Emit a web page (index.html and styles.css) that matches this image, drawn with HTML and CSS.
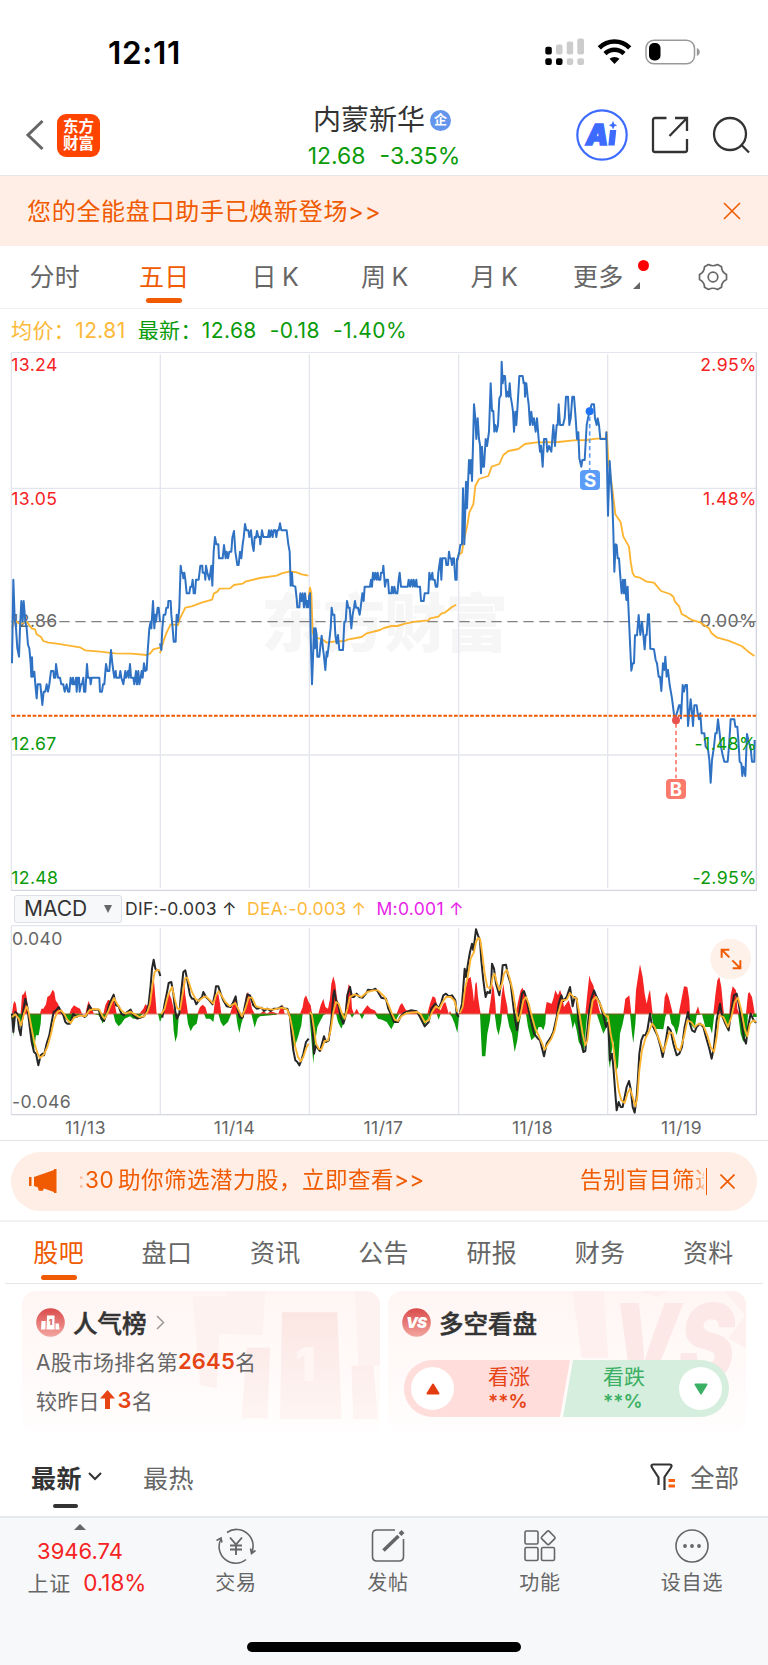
FILE: index.html
```html
<!DOCTYPE html>
<html lang="zh-CN">
<head>
    <meta charset="UTF-8">
    <meta name="viewport" content="width=device-width, initial-scale=1.0">
    <title>内蒙新华 12.68</title>
    <link rel="stylesheet" href="styles.css">
</head>
<body>
    <div class="status">
        <span class="time">12:11</span>
        <svg class="status-icons" width="158" height="30" viewBox="0 0 158 30">
            <g fill="#ccc">
                <rect x="11" y="6.500" width="6.500" height="10" rx="2"/>
                <rect x="21.700" y="3.500" width="6.500" height="13" rx="2"/>
                <rect x="32.300" y="0.500" width="6.700" height="16" rx="2"/>
                <rect x="21.700" y="20.300" width="6.500" height="6.700" rx="2"/>
                <rect x="32.300" y="20.300" width="6.700" height="6.700" rx="2"/>
            </g>
            <rect x="0.300" y="8.800" width="6.500" height="7.700" rx="2"/>
            <rect x="0.300" y="20.300" width="6.500" height="6.700" rx="2"/>
            <rect x="11" y="20.300" width="6.500" height="6.700" rx="2"/>
            <g fill="none" stroke="#000" stroke-width="4.500">
                <path d="M54.300 9.800a21.500 21.500 0 0 1 30.400 0"/>
                <path d="M60 15.700a13.500 13.500 0 0 1 19 0"/>
            </g>
            <path d="M64.500 20.800a7.500 7.500 0 0 1 10 0L69.500 26z"/>
            <rect x="101" y="2.200" width="48.500" height="23.600" rx="8" fill="none" stroke="#999" stroke-width="1.500"/>
            <rect x="104" y="5" width="11.500" height="17.500" rx="5"/>
            <path d="M151.800 10v8c4-1.500 4-6.500 0-8z" fill="#999"/>
        </svg>
    </div>

    <header class="header">
        <div class="header-left">
            <svg width="20" height="32" viewBox="0 0 20 32"><path d="M17.500 2L3 16l14.500 14" fill="none" stroke="#666" stroke-width="3"/></svg>
            <span class="logo">东方<br>财富</span>
        </div>
        <div class="header-title">
            <h1>内蒙新华<span class="badge">企</span></h1>
            <p class="down"><span>12.68</span><span>-3.35%</span></p>
        </div>
        <div class="header-right">
            <svg width="52" height="52" viewBox="0 0 52 52">
                <circle cx="26" cy="26" r="24.700" fill="none" stroke="#3d6bff" stroke-width="2.200"/>
                <text class="ai" x="10" y="36">A</text>
                <path d="M34 21h6.300l-1.600 15.500h-6.400z" fill="#3d6bff"/>
                <path d="M37 12l1.300 2.900 2.900 1.300-2.900 1.300L37 20.400l-1.300-2.900-2.900-1.300 2.900-1.300z" fill="#3d6bff"/>
            </svg>
            <svg width="38" height="38" viewBox="0 0 38 38" fill="none" stroke="#333" stroke-width="2.300">
                <path d="M15.500 2H4a2 2 0 0 0-2 2v30a2 2 0 0 0 2 2h30a2 2 0 0 0 2-2V23M24 2h12v13M36 2L18.500 20"/>
            </svg>
            <svg width="38" height="38" viewBox="0 0 38 38" fill="none" stroke="#333" stroke-width="2.300">
                <circle cx="18" cy="18" r="16"/>
                <path d="M29 28.500l8 8"/>
            </svg>
        </div>
    </header>

    <div class="banner">
        <span>您的全能盘口助手已焕新登场&gt;&gt;</span>
        <svg width="18" height="18" viewBox="0 0 18 18"><path d="M1 1l16 16M17 1L1 17" stroke="#f05a00" stroke-width="1.600"/></svg>
    </div>

    <nav class="periods">
        <a>分时</a>
        <a class="active">五日</a>
        <a class="k">日 K</a>
        <a class="k">周 K</a>
        <a class="k">月 K</a>
        <a class="more">更多<i class="dot"></i><i class="corner"></i></a>
        <a class="setting">
            <svg width="30" height="28" viewBox="0 0 30 28" fill="none" stroke="#666" stroke-width="1.700">
                <path d="M10.500 1.500Q15 4 19.500 1.500L23.500 3.800Q23.500 9 28.500 11.500V16.500Q23.500 19 23.500 24.200L19.500 26.500Q15 24 10.500 26.500L6.500 24.200Q6.500 19 1.500 16.500V11.500Q6.500 9 6.500 3.800Z" stroke-linejoin="round"/>
                <circle cx="15" cy="14" r="4.800"/>
            </svg>
        </a>
    </nav>

    <div class="quote">
        <span class="avg">均价：12.81</span>
        <span class="down"><b>最新：12.68</b><b>-0.18</b><b>-1.40%</b></span>
    </div>

    <!-- 分时图, 3 units = 1px -->
    <svg class="chart" width="768" height="540" viewBox="0 21 2304 1620">
        <text class="watermark" x="784" y="904" textLength="740">东方财富</text>
        <g class="grid">
            <path d="M34 22H2270M34 430H2270M34 1230H2270"/>
            <path d="M34 22V1636M481 28V1630M928 28V1630M1376 28V1630M1823 28V1630"/>
            <path class="edge" d="M34 1636H2269V22"/>
        </g>
        <g class="axis">
            <text class="up" x="34" y="77">13.24</text>
            <text class="up" x="34" y="479">13.05</text>
            <text x="34" y="847">12.86</text>
            <text class="down" x="34" y="1215">12.67</text>
            <text class="down" x="34" y="1617">12.48</text>
            <g text-anchor="end">
                <text class="up" x="2270" y="77">2.95%</text>
                <text class="up" x="2270" y="479">1.48%</text>
                <text x="2270" y="847">0.00%</text>
            </g>
        </g>
        <path d="M34 830H2268" stroke="#808080" stroke-width="4" stroke-dasharray="31 17"/>
        <g class="avg-line">
            <polyline points="36,850 42,825 60,837 80,830 95,850 105,853 110,868 123,876 130,888 145,893 170,896 240,907 255,916 300,920 345,925 395,926 440,930 450,926 460,913 480,908"/>
            <polyline points="480,925 490,890 500,862 512,838 534,840 540,820 546,808 556,788 575,784 605,773 636,764 642,745 652,740 658,731 690,730 702,720 728,716 736,710 780,699 830,692 845,685 870,679 890,682 905,688 925,692"/>
            <polyline transform="translate(900)" points="26,755 30,728 34,745 38,860 42,875 70,885 80,893 100,890 134,888 142,884 185,876 200,865 240,855 252,849 275,843 292,843 315,836 345,830 385,826 390,820 415,815 424,806 436,802 455,787 468,779"/>
            <polyline transform="translate(1320)" points="52,648 56,630 66,622 70,595 82,540 88,502 100,478 106,423 117,402 145,393 155,365 178,357 190,330 205,318 235,312 255,297 290,292 355,291 400,286 440,285 470,281 500,280"/>
            <polyline transform="translate(1320)" points="500,260 505,345 512,395 518,440 526,508 542,532 550,575 567,605 572,650 578,685 585,695 600,698 620,710 642,713 663,738 690,747 700,755 705,770 718,785 725,807 740,815 755,825 780,832 807,850 815,865 830,877 865,887 905,903 925,920 943,933"/>
        </g>
        <g class="price-line">
            <polyline points="36,955 40,704 44,820 48,850 52,910 57,935 60,850 64,768 68,830 71,768 76,830 80,850 84,900 88,910 92,955 94,995 96,937 98,995 103,980 106,1018 110,1060 113,1018 121,1018 127,1080 131,1040 136,1040 140,1018 144,1040 148,1018 153,978 160,978 162,998 166,998 168,957 171,978 174,998 180,998 184,1018 190,1018 194,1040 200,1018 204,1040 208,1040 212,998 217,1018 219,998 222,1018 226,1018 228,998 230,1040 233,998 237,998 239,1040 243,1018 246,1018 250,998 252,1040 256,1040 261,957 264,998 270,998 272,1018 275,998 298,998 300,1040 306,1040 309,1018 313,1018 318,957 322,978 328,978 333,915 337,955 340,978 343,998 347,978 349,998 358,998 361,978 364,998 370,1018 376,978 378,998 384,978 386,998 390,957 393,998 400,998 403,1018 408,978 411,1018 415,978 418,1018 422,998 425,978 428,998 432,955 436,978 440,975 443,920 448,850 452,830 454,850 459,768 463,850 466,809 468,830 473,788 476,788 480,830"/>
            <polyline points="480,895 484,915 487,850 491,809 496,809 499,788 504,788 505,768 512,768 514,809 518,850 521,890 527,890 530,809 534,830 538,788 542,662 545,683 548,683 550,700 553,683 556,704 560,745 568,745 571,725 575,725 578,704 581,745 585,745 588,704 596,704 601,662 607,662 608,683 614,683 616,704 618,662 622,683 628,704 634,662 637,722 641,620 645,576 649,598 655,598 657,640 668,640 672,600 677,640 680,620 684,640 688,620 694,620 697,578 702,558 706,620 712,660 716,660 720,620 724,640 728,598 731,578 735,537 739,556 745,556 748,576 753,556 757,598 761,618 764,576 768,578 771,558 775,576 779,576 781,598 786,556 790,576 804,576 807,556 810,576 814,556 818,576 821,556 826,556 829,576 832,556 836,556 840,535 844,556 860,556 865,598 869,620 872,722 876,683 878,722 886,725 890,760 892,787 898,787 901,745 905,768 908,745 912,787 915,745 920,787 922,768 925,787 928,750"/>
            <polyline transform="translate(900)" points="28,770 30,745 32,870 36,1018 39,940 42,850 45,910 47,850 50,870 52,935 58,935 62,895 65,872 69,910 72,935 76,975 80,920 82,935 87,895 92,850 95,788 98,809 103,809 106,870 110,895 114,870 118,915 129,915 133,830 137,830 141,768 145,788 149,788 154,850 158,809 162,788 165,768 168,788 174,788 179,809 182,788 187,745 191,768 194,725 210,725 213,704 216,725 219,683 223,704 226,683 230,704 233,683 236,704 241,704 243,683 248,683 250,662 255,725 259,704 264,704 267,745 274,745 276,725 280,745 283,725 287,745 292,745 296,704 299,683 303,725 323,725 326,704 330,725 334,704 338,725 341,704 345,725 349,704 351,725 360,725 363,768 371,768 374,745 385,745 388,683 392,704 397,683 399,704 404,704 407,725 412,725 415,683 421,640 424,704 427,640 437,640 439,660 444,660 447,620 450,640 453,640 456,660 459,640 462,640 466,704 470,704 471,640"/>
            <polyline transform="translate(1320)" points="52,645 58,620 61,600 66,598 69,430 73,598 78,410 81,490 83,440 87,345 89,385 93,345 96,408 99,300 102,178 106,220 109,282 113,220 117,282 120,300 123,385 126,305 129,365 132,365 137,282 141,303 144,282 147,260 152,115 156,198 160,198 163,260 166,240 170,260 174,240 178,160 183,150 185,50 188,115 191,93 195,93 199,155 202,140 206,155 209,115 212,155 216,178 219,200 222,260 226,200 229,240 233,178 238,93 248,93 251,115 254,113 255,155 259,115 263,155 266,178 270,240 274,200 278,240 282,220 287,260 291,220 296,282 300,320 303,302 308,365 312,282 319,282 322,320 327,303 334,320 340,240 345,303 350,240 353,240 356,178 360,240 369,240 374,220 378,155 384,155 388,240 392,220 397,155 402,155 407,220 411,282 415,262 418,340 424,365 427,345 434,345 440,240 448,200 455,178 462,178 465,220 470,240 473,220 477,240 481,282 498,282 499,262 504,512 509,348 513,410 517,470 520,560 523,680 527,598 530,600 533,640 537,640 540,683 545,745 549,704 552,745 555,704 559,765 563,725 565,780"/>
            <polyline transform="translate(1680 645)" points="205,135 207,180 211,270 214,332 218,310 222,310 225,226 231,226 236,165 241,225 246,185 250,225 254,268 257,225 260,225 264,163 267,163 271,266 282,268 287,300 291,310 296,350 300,350 304,393 309,310 313,330 316,290 320,350 324,330 329,375 336,415 341,455 344,480 352,455 357,436 361,436 363,475 368,375 372,395 376,375 381,375 384,498 388,458 392,418 396,458 399,498 403,436 410,436 413,460 417,478 421,460 425,520 433,520 437,560 444,568 448,600 452,668 456,600 462,560 466,520 470,520 474,478 479,520 483,560 488,585 493,605 503,605 507,560 512,478 523,478 526,500 532,500 535,540 539,605 544,610 547,648 550,620 556,648 561,522 565,540 572,565 576,605 583,605 584,540"/>
        </g>
        <path d="M34 1112H2268" stroke="#f05a00" stroke-width="6" stroke-dasharray="11 5"/>
        <g class="axis" text-anchor="end">
            <text class="down" x="2270" y="1215">-1.48%</text>
            <text class="down" x="2270" y="1617">-2.95%</text>
        </g>
        <g class="mark">
            <path d="M1769 215V375" stroke="#5b9cf8"/>
            <circle cx="1769" cy="199" r="12" fill="#1f74f5"/>
            <rect x="1740" y="375" width="60" height="60" rx="12" fill="#5b9cf8"/>
            <text x="1770" y="426">S</text>
            <path d="M2028 1135V1300" stroke="#fb7a6c"/>
            <circle cx="2028" cy="1126" r="12" fill="#e9514f"/>
            <rect x="1998" y="1302" width="60" height="60" rx="12" fill="#fb7a6c"/>
            <text x="2028" y="1352">B</text>
        </g>
    </svg>

    <div class="indicator">
        <button type="button">MACD<i></i></button>
        <span class="dif">DIF:-0.003 ↑</span>
        <span class="dea">DEA:-0.003 ↑</span>
        <span class="macd">M:0.001 ↑</span>
    </div>

    <!-- MACD -->
    <div class="macd-box">
        <svg class="chart" width="768" height="191" viewBox="0 134 2304 573">
            <g class="grid">
                <path d="M34 136H2270M34 136V703M481 143V703M928 143V703M1376 143V703M1823 143V703"/>
                <path class="edge" d="M34 703H2269V136"/>
            </g>
            <path fill="#f52323" d="M36 400L40 370 44 362 48 372 52 400zM62 400L66 345 72 340 76 330 80 350 84 385 86 400zM120 400L124 385 130 385 138 372 142 350 150 345 158 328 163 335 167 360 174 370 180 385 186 390 192 400zM208 400L214 385 222 375 230 380 240 385 246 400zM256 400L262 375 266 362 272 378 282 400zM310 400L316 375 324 358 332 362 338 345 344 370 350 400zM375 400L384 392 392 386 400 400zM418 400L430 385 436 372 444 378 450 355 458 320 461 290 466 350 470 400zM485 400L495 385 500 360 508 340 514 355 522 390 530 400zM540 400L546 345 552 295 556 345 562 385 564 400zM592 400L600 380 608 373 616 380 622 400zM640 400L644 370 648 345 655 340 660 370 664 400zM690 400L700 370 708 350 712 385 716 400zM732 400L738 345 744 335 750 355 756 385 764 400zM780 400L790 392 800 400 812 393 835 400 842 380 848 374 854 400zM900 400L908 380 912 355 918 345 926 365 932 375 936 400zM955 400L962 375 970 355 976 380 984 385 990 355 994 310 1000 288 1006 310 1010 345 1016 390 1018 400zM1035 400L1040 345 1046 312 1052 320 1056 385 1062 400 1070 385 1078 400zM1084 400L1092 388 1102 375 1112 385 1124 390 1132 400z"/>
            <path fill="#f52323" transform="translate(1140)" d="M50 400L60 375 66 368 78 390 110 393 120 400zM142 400L150 370 158 348 166 352 172 378 182 390 190 370 196 365 202 385 206 400 210 392 214 400zM236 400L244 380 252 340 258 320 264 295 272 290 278 330 282 365 286 310 290 305 294 350 300 390 302 400zM326 400L332 360 338 310 342 330 346 370 348 400zM360 400L364 350 370 310 374 340 382 380 384 400zM408 400L414 365 422 330 428 322 434 340 438 360 446 385 454 400zM494 400L500 365 515 370 520 355 526 330 534 345 540 328 546 345 552 380 566 360 574 385 578 400zM616 400L622 340 628 285 632 300 640 315 646 345 652 365 658 390 662 400zM730 400L736 355 742 350 748 345 754 400zM764 400L768 330 774 290 780 252 788 290 794 340 800 370 806 340 810 328 816 385 818 400zM850 400L854 350 860 335 866 350 876 390 878 400zM896 400L904 360 912 318 922 320 928 360 930 400zM946 400L954 378 960 400zM1000 400L1006 345 1012 300 1018 290 1024 320 1030 385 1032 400zM1048 400L1052 345 1058 318 1068 330 1072 385 1078 400zM1098 400L1104 340 1108 335 1116 350 1122 385 1124 400z"/>
            <path fill="#0a9b0a" d="M34 400L38 440 40 470 42 440 44 400zM52 400L58 420 62 435 68 425 72 400zM84 400L92 440 96 500 102 510 108 465 116 465 122 430 124 400zM186 400L196 415 208 428 216 420 222 410 234 405 240 400zM280 400L296 405 302 415 308 430 314 415 322 400zM340 400L346 425 356 438 364 430 374 415 390 408 400 415 410 415 420 408 430 400zM474 400L480 425 484 415 490 400zM518 400L521 450 526 485 532 465 536 410 540 400zM560 400L564 430 572 453 580 438 590 430 596 400zM612 400L618 415 630 415 640 425 644 400zM655 400L662 425 670 438 684 425 690 410 694 400zM708 400L712 430 718 458 724 430 730 410 732 400zM754 400L764 442 772 415 780 408 830 403 830 400zM868 400L872 450 878 490 884 500 894 470 904 435 908 400zM928 400L936 500 940 550 944 500 952 440 962 420 970 405 978 400zM1008 400L1014 425 1024 445 1032 425 1040 400zM1050 400L1056 412 1064 400zM1078 400L1086 417 1094 400zM1124 400L1134 415 1146 418 1160 425 1174 447 1182 430 1190 415 1198 400z"/>
            <path fill="#0a9b0a" transform="translate(1140)" d="M118 400L128 425 134 435 142 420 148 400zM170 400L176 418 182 400zM208 400L216 410 224 430 232 458 236 420 238 400zM300 400L306 528 316 528 322 460 330 420 332 400zM344 400L350 445 356 465 364 425 366 400zM380 400L388 440 396 460 404 515 412 480 418 430 424 400zM438 400L444 440 454 480 464 470 476 440 484 440 490 450 496 430 498 400zM570 400L578 445 584 425 590 450 596 485 606 500 612 518 618 440 622 400zM650 400L660 430 670 460 680 440 684 400 686 540 690 565 694 520 700 480 708 575 714 560 720 460 728 430 734 400zM750 400L756 460 760 488 766 430 768 400zM814 400L822 445 850 447 856 410 860 400zM868 400L874 430 882 440 890 465 898 430 902 400zM924 400L930 430 944 445 950 405 966 402 976 440 990 440 996 460 1002 410 1004 400zM1024 400L1034 425 1046 445 1052 400zM1074 400L1082 460 1090 485 1100 460 1104 400zM1118 400L1120 410H1130V400z"/>
            <path d="M36 401H2268" stroke="#c33a1a" stroke-width="2"/>
            <g class="dif-line">
                <polyline points="36,400 40,455 46,395 52,400 57,445 62,465 68,400 76,355 82,380 88,430 95,485 102,515 108,520 115,555 122,525 128,520 132,525 140,490 148,465 155,425 161,395 168,390 176,380 184,395 190,405 196,425 202,430 210,430 220,400 228,410 238,405 246,405 254,410 260,405 267,375 276,388 296,388 304,415 312,422 320,400 328,370 341,343 348,375 356,378 364,400 372,405 382,395 392,388 400,405 412,415 422,412 432,408 440,395 446,370 452,315 456,265 461,238 466,265 470,270 476,270 481,287"/>
                <polyline points="487,412 494,370 502,330 506,308 514,305 520,340 526,395 531,415 538,400 543,340 550,275 556,270 562,300 570,345 576,355 582,355 589,372 598,358 606,350 610,335 618,350 628,360 638,372 644,345 648,318 655,318 662,340 670,360 680,378 692,380 700,365 707,348 712,385 720,412 728,412 734,380 742,342 750,345 760,375 770,385 784,382 792,392 802,385 812,392 822,385 834,385 845,378 852,385 862,385 870,410 875,465 880,510 886,540 892,545 898,555 904,540 910,520 918,485 926,475"/>
                <polyline points="932,395 938,450 942,520 948,495 954,505 960,512 966,490 972,468 978,485 986,480 994,420 1000,345 1003,330 1008,360 1014,370 1022,410 1030,430 1036,410 1042,345 1050,320 1056,350 1062,350 1070,340 1078,350 1088,352 1098,340 1104,328 1116,330 1126,325 1134,335 1144,352 1158,355 1165,385 1174,405 1182,425 1194,425 1202,408 1212,398 1232,390 1250,393 1260,410 1274,438 1286,425 1294,385 1306,370 1316,385 1324,365 1330,345 1338,340 1346,348 1356,345 1366,360 1370,400 1376,410"/>
                <polyline transform="translate(1140)" points="240,395 246,370 250,320 254,265 258,290 264,250 270,215 276,190 280,210 284,180 288,147 294,165 300,180 304,240 310,300 314,330 317,350 322,335 330,338 334,300 336,250 342,265 348,310 358,345 364,300 368,255 378,253 384,285 392,310 398,360 404,410 411,450 418,400 426,340 432,332 438,350 446,390 454,425 462,460 474,475 480,480 492,528 500,490 512,472 520,455 530,410 536,370 544,345 550,362 560,350 570,320 578,378 584,350 590,355 596,430 604,490 610,515 616,512 622,450 628,390 634,355 642,330 650,350 660,370 670,405 678,440 684,425"/>
                <polyline transform="translate(1140)" points="684,425 688,500 690,540 696,520 700,560 706,640 710,690 716,665 722,680 728,680 734,650 740,620 747,602 752,625 758,680 764,697 770,650 774,590 778,520 784,480 790,465 796,465 802,450 810,400 814,425 822,445 832,465 842,500 848,530 856,490 864,440 872,450 880,490 890,525 898,520 906,500 914,440 924,395 930,430 936,450 944,455 950,440 960,430 970,440 978,470 988,505 995,535 1002,500 1010,420 1020,370 1026,405 1036,430 1046,450 1054,390 1062,345 1070,340 1076,370 1084,420 1092,475 1098,490 1104,440 1112,400 1120,418 1128,428"/>
            </g>
            <g class="avg-line">
                <polyline points="36,410 46,402 56,415 63,435 72,400 80,378 86,395 94,440 104,490 113,520 120,533 132,522 142,500 152,465 162,420 172,395 182,390 192,400 202,418 212,428 222,412 240,405 256,408 268,390 282,386 298,388 308,408 314,415 324,395 334,370 342,353 352,372 364,390 376,400 392,394 404,402 418,410 432,408 442,395 450,370 458,310 464,275 472,268 480,272"/>
                <polyline points="484,402 494,385 504,345 516,320 524,355 532,385 540,388 548,340 556,293 562,292 568,310 576,335 586,355 596,362 608,352 618,348 630,360 640,370 648,345 656,333 664,345 676,365 690,378 706,368 714,385 726,408 736,385 746,352 756,352 768,378 790,385 820,388 846,382 862,388 870,410 878,450 886,500 894,530 902,543 910,530 918,505 926,490"/>
                <polyline points="930,395 936,405 942,445 948,490 956,505 964,508 974,482 984,480 992,450 1000,395 1008,365 1016,370 1026,400 1034,415 1042,385 1050,350 1064,342 1084,350 1102,335 1120,330 1134,330 1154,350 1164,370 1174,395 1184,418 1194,422 1204,408 1220,398 1252,395 1262,402 1274,425 1286,420 1296,395 1308,378 1318,385 1328,365 1338,350 1352,350 1364,362 1372,395"/>
                <polyline transform="translate(1140)" points="240,398 248,380 256,320 264,285 272,235 282,215 288,185 294,173 300,175 306,215 314,280 322,320 332,325 338,290 344,280 350,305 358,330 366,310 372,280 380,268 388,290 398,330 406,380 414,422 422,400 430,360 438,350 446,370 456,410 466,445 478,470 494,508 504,490 514,475 524,450 534,400 546,360 560,358 570,338 580,350 590,355 600,410 608,460 616,495 622,480 630,410 638,360 648,350 660,370 672,400 684,412"/>
                <polyline transform="translate(1140)" points="684,405 692,460 700,500 708,570 716,630 724,660 734,668 742,640 750,625 758,650 766,678 772,650 778,570 786,510 796,475 806,455 816,430 824,440 836,475 850,515 858,490 868,455 878,460 890,505 900,510 912,470 922,420 934,425 944,440 956,430 970,435 982,465 992,500 1002,515 1010,470 1018,405 1030,410 1044,440 1054,410 1064,365 1074,352 1084,390 1094,445 1102,468 1110,430 1120,420 1128,425"/>
            </g>
            <g class="axis">
                <text x="36" y="195">0.040</text>
                <text x="36" y="683">-0.046</text>
            </g>
            <circle cx="2192" cy="236" r="61" fill="#fdf1ea"/>
            <path d="M2188 208H2165V232M2165 208L2188 231M2221 240V264H2198M2221 264L2197 240" fill="none" stroke="#f05a00" stroke-width="6"/>
        </svg>
    </div>

    <div class="dates">
        <span>11/13</span>
        <span>11/14</span>
        <span>11/17</span>
        <span>11/18</span>
        <span>11/19</span>
    </div>

    <div class="notice-wrap">
        <div class="notice">
            <svg width="28" height="25" viewBox="0 0 28 25" fill="#f05a00">
                <path d="M0 8h2.500v9H0zM5 8L25 1V0h2.500v24H25v-1l-10-3.500-1.500 2.500-4-.5-.5-3-4-1.500z"/>
            </svg>
            <div class="notice-text">
                <span>:30 助你筛选潜力股，立即查看&gt;&gt;</span>
                <span>告别盲目筛选</span>
            </div>
            <svg width="15" height="15" viewBox="0 0 15 15"><path d="M.5.5l14 14M14.500.5l-14 14" stroke="#f05a00" stroke-width="1.700"/></svg>
        </div>
    </div>

    <nav class="sections">
        <a class="active">股吧</a>
        <a>盘口</a>
        <a>资讯</a>
        <a>公告</a>
        <a>研报</a>
        <a>财务</a>
        <a>资料</a>
    </nav>

    <div class="cards">
        <div class="card">
            <svg class="card-bg" viewBox="66 468 1074 426">
                <defs>
                    <linearGradient id="fade" x1="0" y1="0" x2="0" y2="1">
                        <stop offset="0" stop-color="#fbe6e3"/>
                        <stop offset="1" stop-color="#fef5f3"/>
                    </linearGradient>
                </defs>
                <path d="M578 482H678V468H796L788 600 658 596 650 760 600 750zM1065 468H1140V692H1075z" fill="#fef2f0"/>
                <path d="M740 638H810L803 850H725zM846 532H1012L1025 852H840zM1054 692H1120L1134 852H1060z" fill="url(#fade)"/>
                <text class="card-one" x="884" y="738">1</text>
            </svg>
            <h2>
                <svg width="29" height="29" viewBox="0 0 29 29">
                    <defs>
                        <linearGradient id="ball" x1="0" y1="0" x2="0" y2="1">
                            <stop offset="0" stop-color="#d94b4b"/>
                            <stop offset="1" stop-color="#f3a6a0"/>
                        </linearGradient>
                    </defs>
                    <circle cx="14.500" cy="14.500" r="14.300" fill="url(#ball)"/>
                    <path d="M5.500 13h4.300l-.5 8.500H5zM11 7.500h7.500v14h-8zM19.500 15.500h3.300l.7 6h-4z" fill="#fff"/>
                    <text class="ball-one" x="14.500" y="17">1</text>
                </svg>
                人气榜
                <svg class="arrow" width="9" height="15" viewBox="0 0 9 15"><path d="M1 1l6.500 6.500L1 14" fill="none" stroke="#999" stroke-width="1.500"/></svg>
            </h2>
            <p>A股市场排名第<b>2645</b>名</p>
            <p>较昨日<svg width="15" height="20" viewBox="0 0 15 20"><path d="M7.500 0L15 8.500H10V19H5V8.500H0z" fill="#e64415"/></svg><b class="step">3</b>名</p>
        </div>
        <div class="card">
            <svg class="card-bg" viewBox="29 468 1074 426">
                <path d="M582 468H676L690 668H610zM780 468H870L840 486z" fill="#fdf0ee"/>
                <path d="M1040 468H1075Q1103 470 1103 500V640L1050 610 1100 540z" fill="#fef0ee"/>
                <text class="card-vs" x="700" y="735" textLength="370" lengthAdjust="spacingAndGlyphs">VS</text>
            </svg>
            <h2>
                <svg width="29" height="29" viewBox="0 0 29 29">
                    <circle cx="14.500" cy="14.500" r="14.300" fill="url(#ball)"/>
                    <text class="ball-vs" x="14" y="20">VS</text>
                </svg>
                多空看盘
            </h2>
            <div class="vote">
                <div class="vote-up">
                    <i><svg width="14" height="12" viewBox="0 0 14 12"><path d="M7 1.500L12.500 10.500H1.500z" fill="#e23c10" stroke="#e23c10" stroke-width="2" stroke-linejoin="round"/></svg></i>
                    <span>看涨<b>**%</b></span>
                </div>
                <div class="vote-down">
                    <span>看跌<b>**%</b></span>
                    <i><svg width="14" height="12" viewBox="0 0 14 12"><path d="M7 10.500L1.500 1.500H12.500z" fill="#3bb064" stroke="#3bb064" stroke-width="2" stroke-linejoin="round"/></svg></i>
                </div>
            </div>
        </div>
    </div>

    <div class="sort">
        <a class="active">最新<svg width="14" height="9" viewBox="0 0 14 9"><path d="M1 1l6 6 6-6" fill="none" stroke="#333" stroke-width="2"/></svg></a>
        <a>最热</a>
        <span class="filter">
            <svg width="26" height="28" viewBox="0 0 26 28" fill="none" stroke="#333" stroke-width="2.200">
                <path d="M8.500 22V14.500L2 4.500Q.5 1.500 3 1.500H20Q22.500 1.500 21 4.500L14.500 14V27" stroke-linejoin="round"/>
                <path d="M18.500 17.500H25M18.500 23H25" stroke="#ff6010" stroke-width="2.800"/>
            </svg>
            <span>全部</span>
        </span>
    </div>

    <footer class="toolbar">
        <div class="index">
            <i></i>
            <span class="value">3946.74</span>
            <span>上证<em>0.18%</em></span>
        </div>
        <div class="tool">
            <svg width="40" height="36" viewBox="0 0 40 36" fill="none" stroke="#666" stroke-width="1.600">
                <path d="M11 4.500A16.500 16.500 0 0 1 35.500 25M30 31.500A16.500 16.500 0 0 1 5 11M.5 12.500L5 10 6 14.500M39.500 22.500L35.500 25.500 34.500 20.500"/>
                <path d="M14 9.500l6 7 6-7M20 16.500V27M14 17.500H26M14 21.500H26" stroke-width="1.900"/>
            </svg>
            交易
        </div>
        <div class="tool">
            <svg width="34" height="36" viewBox="0 0 34 36" fill="none" stroke="#666" stroke-width="1.600">
                <path d="M24 2H6Q1.500 2 1.500 6.500V28.500Q1.500 33 6 33H28Q32.500 33 32.500 28.500V11"/>
                <path d="M12.500 22.500L27.500 8" stroke-width="3.600"/>
                <path d="M29 6.500L32 3.500" stroke-width="4"/>
            </svg>
            发帖
        </div>
        <div class="tool">
            <svg width="34" height="36" viewBox="0 0 34 36" fill="none" stroke="#666" stroke-width="1.600">
                <rect x="2" y="3" width="13" height="13" rx="1.500"/>
                <rect x="2" y="19.500" width="13" height="13" rx="1.500"/>
                <rect x="18.500" y="19.500" width="13" height="13" rx="1.500"/>
                <rect x="20" y="4.500" width="10.500" height="10.500" rx="1.500" transform="rotate(45 25.200 9.700)"/>
            </svg>
            功能
        </div>
        <div class="tool">
            <svg width="36" height="36" viewBox="0 0 36 36" fill="#666">
                <circle cx="18" cy="18" r="16" fill="none" stroke="#666" stroke-width="1.600"/>
                <circle cx="11" cy="18" r="1.900"/>
                <circle cx="18" cy="18" r="1.900"/>
                <circle cx="25" cy="18" r="1.900"/>
            </svg>
            设自选
        </div>
        <div class="home"></div>
    </footer>
</body>
</html>
```

FILE: styles.css
```css
* {
    box-sizing: border-box;
}

body {
    margin: 0;
    width: 768px;
    height: 1665px;
    overflow: hidden;
    background-color: #fff;
    color: #666;
    font-family: Inter, "Noto Sans CJK SC", sans-serif;
    font-size: 25px;
}

h1, h2, p {
    margin: 0;
    font-weight: normal;
}

i, em {
    font-style: normal;
}

svg {
    display: block;
    flex: none;
}

.up {
    color: #f52323;
    fill: #f52323;
}

.down {
    color: #0a9b0a;
    fill: #0a9b0a;
}

/* status bar */
.status {
    height: 95px;
    display: flex;
    justify-content: space-between;
    padding: 38px 65px 0 108px;
}

.time {
    color: #000;
    font-size: 31.500px;
    font-weight: 600;
    letter-spacing: 0.7px;
    line-height: 30px;
}

/* header */
.header {
    height: 81px;
    display: grid;
    grid-template-columns: 1fr 200px 1fr;
    align-items: center;
    border-bottom: 1px solid #e6e6e8;
}

.header-left {
    display: flex;
    align-items: center;
    gap: 12px;
    padding-left: 25px;
}

.logo {
    width: 43px;
    height: 43px;
    padding-top: 4px;
    border-radius: 9px;
    background-color: #ff4400;
    color: #fff;
    font-size: 15.500px;
    font-weight: 700;
    line-height: 17px;
    text-align: center;
}

.header-title {
    padding-top: 6px;
    text-align: center;
}

.header-title h1 {
    display: flex;
    align-items: center;
    justify-content: center;
    gap: 5px;
    margin-right: 4px;
    color: #333;
    font-size: 28px;
    line-height: 36px;
}

.header-title p {
    display: flex;
    justify-content: center;
    gap: 14px;
    font-size: 23px;
    line-height: 36px;
}

.badge {
    width: 21px;
    height: 21px;
    border-radius: 50%;
    background-color: #6495ed;
    color: #fff;
    font-size: 13px;
    font-weight: bold;
    line-height: 19px;
}

.header-right {
    display: flex;
    align-items: center;
    justify-content: flex-end;
    gap: 23px;
    padding-right: 18px;
}

.ai {
    fill: #3d6bff;
    stroke: #3d6bff;
    stroke-width: 1.5px;
    font-size: 28px;
    font-weight: 900;
    font-style: italic;
}

/* banner */
.banner {
    height: 70px;
    display: flex;
    align-items: center;
    justify-content: space-between;
    padding: 0 27px;
    background-color: #feeee6;
    color: #f05a00;
    font-size: 24px;
    letter-spacing: 0.7px;
}

.banner span {
    margin-top: -4px;
}

/* period tabs */
.periods {
    height: 63px;
    display: grid;
    grid-template-columns: repeat(6, 109.500px) 1fr;
    border-bottom: 1px solid #f0f0f2;
}

.periods a, .sections a {
    display: flex;
    align-items: center;
    justify-content: center;
    position: relative;
    padding-bottom: 4px;
    letter-spacing: 0.3px;
}

.periods .k {
    padding-left: 3px;
    word-spacing: -2px;
}

.periods .more {
    padding-right: 8px;
}

.periods .setting {
    padding-bottom: 0;
}

.active {
    color: #f05a00;
}

.periods .active::after, .sections .active::after {
    content: "";
    position: absolute;
    bottom: 5px;
    width: 36px;
    height: 5px;
    border-radius: 3px;
    background-color: #f05a00;
}

.sections .active::after {
    bottom: 3px;
}

.dot {
    position: absolute;
    left: 90px;
    top: 14px;
    width: 11px;
    height: 11px;
    border-radius: 50%;
    background-color: #ff0000;
}

.corner {
    position: absolute;
    left: 85px;
    top: 36px;
    border-left: 7px solid transparent;
    border-bottom: 7px solid #666;
}

/* latest quote */
.quote {
    height: 43px;
    display: flex;
    align-items: center;
    gap: 12px;
    padding: 0 0 3px 11px;
    font-size: 21px;
    letter-spacing: 0.400px;
}

.quote b {
    margin-right: 13px;
    font-weight: normal;
}

.avg, .dea {
    color: #fdb93a;
}

/* charts */
.grid {
    fill: none;
    stroke: #e3e6ee;
    stroke-width: 4px;
}

.edge {
    stroke: #d3d6df;
}

.watermark {
    fill: #f6f6f6;
    font-size: 188px;
    font-weight: 900;
}

.axis {
    fill: #666;
    font-size: 53px;
    letter-spacing: 1px;
}

.avg-line, .price-line, .dif-line {
    fill: none;
    stroke: #fdb430;
    stroke-width: 5.5px;
    stroke-linejoin: round;
}

.price-line {
    stroke: #2f72c3;
    stroke-width: 6px;
}

.dif-line {
    stroke: #262626;
    stroke-width: 6px;
}

.mark {
    stroke-width: 5px;
    stroke-dasharray: 13 9;
}

.mark circle, .mark rect {
    stroke: none;
}

.mark text {
    fill: #fff;
    stroke: none;
    font-size: 56px;
    font-weight: 700;
    text-anchor: middle;
}

/* indicator row */
.indicator {
    height: 33px;
    display: flex;
    align-items: center;
    gap: 10px;
    padding-left: 14px;
    font-size: 17.500px;
    letter-spacing: 0.3px;
}

.indicator button {
    width: 108px;
    height: 28px;
    display: flex;
    align-items: center;
    justify-content: space-between;
    margin-right: -7px;
    padding: 0 9px;
    border: 1px solid #dcdfe6;
    border-radius: 3px;
    background-color: #f7f8fa;
    color: #333;
    font-family: inherit;
    font-size: 21px;
}

.indicator i {
    border: 4px solid transparent;
    border-top: 8px solid #666;
    border-bottom: 0;
}

.dif {
    color: #333;
}

.macd {
    color: #e81ee8;
}

.dates {
    height: 25px;
    display: grid;
    grid-template-columns: repeat(5, 149px);
    padding-left: 11px;
    border-bottom: 1px solid #e3e3e8;
    font-size: 17.500px;
    letter-spacing: 0.5px;
    line-height: 24px;
    text-align: center;
}

/* scrolling notice */
.notice-wrap {
    height: 81px;
    padding: 11px 11px 0;
    border-bottom: 2px solid #f2f2f4;
}

.notice {
    height: 59px;
    display: flex;
    align-items: center;
    padding: 0 22px 0 18px;
    border-radius: 30px;
    background-color: #feeee6;
    color: #f05a00;
    font-size: 22.500px;
}

.notice-text {
    width: 634px;
    height: 27px;
    display: flex;
    align-items: center;
    margin: 0 13px 0 16px;
    padding-left: 5px;
    border-right: 1px solid #f05a00;
    overflow: hidden;
    white-space: nowrap;
    letter-spacing: 0.5px;
    line-height: 27px;
}

.notice-text span {
    flex: none;
    width: 502px;
    padding-bottom: 4px;
    word-spacing: -3px;
    -webkit-mask-image: linear-gradient(90deg, rgba(0, 0, 0, 0.3) 5px, #000 6px);
    mask-image: linear-gradient(90deg, rgba(0, 0, 0, 0.3) 5px, #000 6px);
}

.notice-text span:last-child {
    width: 124px;
    overflow: hidden;
    -webkit-mask-image: linear-gradient(90deg, #000 112px, transparent 128px);
    mask-image: linear-gradient(90deg, #000 112px, transparent 128px);
}

/* section tabs */
.sections {
    height: 62px;
    display: grid;
    grid-template-columns: repeat(7, 1fr);
    margin: 0 5px;
    border-bottom: 1px solid #e6e6e8;
}

.sections a {
    padding-right: 1px;
}

/* cards */
.cards {
    height: 150px;
    display: grid;
    grid-template-columns: 358px 358px;
    gap: 8px;
    padding: 7px 22px 0;
}

.card {
    height: 142px;
    padding: 17px 14px 0;
    position: relative;
    border-radius: 14px;
    background: linear-gradient(#fff6f4, #fffdfd);
    overflow: hidden;
    font-size: 21px;
}

.card-bg {
    position: absolute;
    left: 0;
    top: 0;
    width: 358px;
    height: 142px;
}

.card-one {
    fill: #fff5f3;
    font-size: 140px;
    font-weight: 900;
}

.card-vs {
    fill: #fce8e6;
    font-size: 318px;
    font-weight: 900;
    font-style: italic;
}

.card h2 {
    height: 29px;
    display: flex;
    align-items: center;
    gap: 8px;
    position: relative;
    color: #333;
    font-size: 24.500px;
    font-weight: 500;
    -webkit-text-stroke: 0.5px #333;
}

.card h2 text {
    -webkit-text-stroke: 0;
}

.arrow {
    margin-left: 1px;
}

.card p {
    height: 39px;
    display: flex;
    align-items: center;
    position: relative;
    top: 4px;
    letter-spacing: 0.2px;
}

.card p b {
    color: #e64415;
    font-size: 22px;
    font-weight: 600;
}

.card p .step {
    margin-left: 3px;
}

.ball-one, .ball-vs {
    fill: #d96a66;
    font-size: 8px;
    font-weight: 900;
    text-anchor: middle;
}

.ball-vs {
    fill: #fff;
    font-size: 15px;
    font-style: italic;
    letter-spacing: -1px;
}

.vote {
    display: flex;
    position: relative;
    margin: 23px 0 0 2px;
}

.vote div {
    width: 166px;
    height: 57px;
    display: flex;
    align-items: center;
    flex: none;
}

.vote i {
    width: 43px;
    height: 43px;
    display: flex;
    align-items: center;
    justify-content: center;
    border-radius: 50%;
    background-color: #fff;
}

.vote span {
    width: 42px;
    line-height: 25px;
    white-space: nowrap;
}

.vote b {
    display: block;
    font-size: 19px;
    font-weight: 600;
}

.vote-up {
    padding-left: 7px;
    border-radius: 29px 0 0 29px;
    background-color: #fedddb;
    color: #e64415;
    clip-path: polygon(0 0, 100% 0, calc(100% - 10px) 100%, 0 100%);
}

.vote-up span {
    margin-left: 34px;
}

.vote-down {
    margin-left: -7px;
    padding-left: 40px;
    border-radius: 0 29px 29px 0;
    background-color: #d6eedd;
    color: #3bb064;
    clip-path: polygon(10px 0, 100% 0, 100% 100%, 0 100%);
}

.vote-down i {
    margin-left: 34px;
}

/* post list sorting */
.sort {
    height: 84px;
    display: flex;
    align-items: center;
    padding: 3px 29px 0 31px;
    border-bottom: 2px solid #e6e8ea;
}

.sort a {
    display: flex;
    align-items: center;
    gap: 6px;
    position: relative;
    margin-right: 41px;
    letter-spacing: 0.5px;
}

.sort .active {
    color: #333;
    font-weight: bold;
}

.sort .active::after {
    content: "";
    position: absolute;
    left: 22px;
    bottom: -13px;
    width: 25px;
    height: 4px;
    border-radius: 2px;
    background-color: #333;
}

.filter {
    display: flex;
    align-items: center;
    gap: 14px;
    margin-left: auto;
    font-size: 24.500px;
}

/* bottom toolbar */
.toolbar {
    height: 148px;
    display: grid;
    grid-template-columns: 160px repeat(4, 152px);
    position: relative;
    background-color: #f7f8fa;
    font-size: 20px;
    letter-spacing: 0.8px;
}

.index, .tool {
    display: flex;
    flex-direction: column;
    align-items: center;
}

.tool {
    padding-top: 10px;
    line-height: 39px;
}

.index i {
    margin-top: 6px;
    border: 6px solid transparent;
    border-top: 0;
    border-bottom: 6px solid #666;
}

.index span {
    padding-left: 14px;
    font-size: 21px;
    line-height: 31px;
}

.index .value {
    margin-top: 6px;
    padding: 0;
}

.index .value, .index em {
    color: #f52323;
    font-size: 22px;
    letter-spacing: 0;
}

.index em {
    margin-left: 12px;
    font-size: 22.500px;
}

.home {
    position: absolute;
    left: 247px;
    bottom: 14px;
    width: 274px;
    height: 10px;
    border-radius: 5px;
    background-color: #000;
}
```
